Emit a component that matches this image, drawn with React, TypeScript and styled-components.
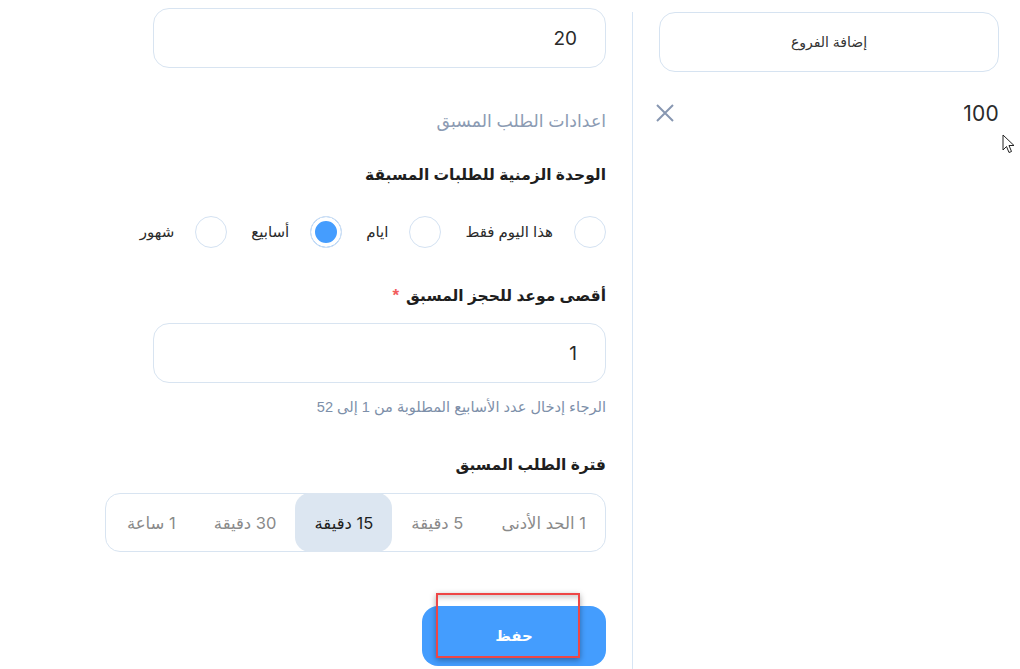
import React from "react";
import styled, { createGlobalStyle } from "styled-components";

const Global = createGlobalStyle`
  html, body { margin: 0; padding: 0; background: #ffffff; }
  body { font-family: "Liberation Sans", "DejaVu Sans", sans-serif; color: #222; }
  * { box-sizing: border-box; }
`;

const Page = styled.div`
  direction: rtl;
  display: flex;
  align-items: stretch;
  width: 1020px;
  height: 669px;
  overflow: hidden;
  padding-right: 21px;
  position: relative;
`;

const Side = styled.aside`
  width: 367px;
  flex: none;
  margin-top: 12px;
  padding-left: 26px;
  border-left: 1px solid #d7e5f4;
  display: flex;
  flex-direction: column;
`;

const BranchButton = styled.button`
  height: 60px;
  width: 100%;
  border: 1px solid #d6e3f1;
  border-radius: 16px;
  background: #fff;
  font-family: "Liberation Sans", "DejaVu Sans", sans-serif;
  font-size: 14px;
  color: #333;
  direction: rtl;
`;

const BranchRow = styled.div`
  display: flex;
  align-items: center;
  justify-content: space-between;
  margin-top: 29px;
  height: 24px;
`;

const BranchValue = styled.span`
  font-family: "Inter", "DejaVu Sans", sans-serif;
  font-size: 21px;
  color: #2a2a2a;
  letter-spacing: 0.2px;
`;

const RemoveIcon = styled.svg`
  width: 22px;
  height: 22px;
  margin-left: -5px;
`;

const Main = styled.main`
  width: 501px;
  flex: none;
  margin-right: 26px;
  display: flex;
  flex-direction: column;
  align-items: flex-start;
`;

const Field = styled.div<{ $top: number }>`
  width: 453px;
  height: 60px;
  margin-top: ${(p) => p.$top}px;
  border: 1px solid #d8e4f1;
  border-radius: 16px;
  display: flex;
  align-items: center;
  padding-right: 28px;
  font-family: "Inter", "DejaVu Sans", sans-serif;
  font-size: 19px;
  color: #2a2a2a;
`;

const SectionTitle = styled.div<{ $top: number }>`
  margin-top: ${(p) => p.$top}px;
  height: 24px;
  line-height: 24px;
  font-size: 17.3px;
  color: #8c9bb3;
`;

const Label = styled.div<{ $top: number }>`
  margin-top: ${(p) => p.$top}px;
  height: 24px;
  line-height: 24px;
  font-size: 15.5px;
  font-weight: bold;
  color: #1e1e1e;
  display: flex;
  gap: 7px;
`;

const Star = styled.span`
  color: #f25c5c;
  font-weight: bold;
  font-size: 17px;
`;

const RadioRow = styled.div`
  margin-top: 29px;
  display: flex;
  align-items: center;
  gap: 24px;
  height: 32px;
`;

const RadioItem = styled.label`
  display: flex;
  align-items: center;
  gap: 21px;
  font-size: 15px;
  color: #2a2a2a;
`;

const RadioCircle = styled.span<{ $on?: boolean }>`
  width: 32px;
  height: 32px;
  border-radius: 50%;
  border: 1px solid #d4e2f2;
  background: ${(p) => (p.$on ? "#459dfe" : "#fff")};
  box-shadow: ${(p) => (p.$on ? "inset 0 0 0 4px #fff" : "none")};
  flex: none;
`;

const Hint = styled.div`
  margin-top: 14px;
  height: 20px;
  line-height: 20px;
  font-size: 14.6px;
  color: #7d8fa9;
`;

const Segmented = styled.div`
  margin-top: 16px;
  width: 501px;
  height: 59px;
  border: 1px solid #d8e4f1;
  border-radius: 15px;
  display: flex;
  align-items: stretch;
`;

const Segment = styled.div<{ $on?: boolean }>`
  padding: 0 19px;
  display: flex;
  align-items: center;
  margin: -1px 0;
  border-radius: 15px;
  font-family: "Inter", "DejaVu Sans", sans-serif;
  font-size: 16.5px;
  color: ${(p) => (p.$on ? "#1e1e1e" : "#8a8a8a")};
  background: ${(p) => (p.$on ? "#dce6f1" : "transparent")};
  white-space: nowrap;
`;

const SaveWrap = styled.div`
  position: relative;
  margin-top: 54px;
`;

const SaveButton = styled.button`
  width: 184px;
  height: 60px;
  border: none;
  border-radius: 16px;
  background: #449dfe;
  color: #fff;
  font-family: "Liberation Sans", "DejaVu Sans", sans-serif;
  font-weight: bold;
  font-size: 15px;
`;

const Highlight = styled.div`
  position: absolute;
  right: 26px;
  top: -13px;
  width: 144px;
  height: 65px;
  border: 2px solid #ee4646;
  box-shadow: 0 2px 6px rgba(0, 0, 0, 0.35), inset 0 6px 5px -3px rgba(0, 0, 0, 0.18);
  pointer-events: none;
`;

const Cursor = styled.svg`
  position: absolute;
  left: 1002px;
  top: 134px;
  width: 14px;
  height: 20px;
`;

const units = [
  { label: "هذا اليوم فقط" },
  { label: "ايام" },
  { label: "أسابيع", on: true },
  { label: "شهور" },
];

const periods = [
  { label: "1 الحد الأدنى" },
  { label: "5 دقيقة" },
  { label: "15 دقيقة", on: true },
  { label: "30 دقيقة" },
  { label: "1 ساعة" },
];

export default function App() {
  return (
    <>
      <Global />
      <Page>
        <Side>
          <BranchButton>إضافة الفروع</BranchButton>
          <BranchRow>
            <BranchValue>100</BranchValue>
            <RemoveIcon viewBox="0 0 22 22">
              <path d="M3 3 L19 19 M19 3 L3 19" stroke="#8797b1" strokeWidth="2" fill="none" />
            </RemoveIcon>
          </BranchRow>
        </Side>
        <Main>
          <Field $top={8}>20</Field>
          <SectionTitle $top={41}>اعدادات الطلب المسبق</SectionTitle>
          <Label $top={30}>الوحدة الزمنية للطلبات المسبقة</Label>
          <RadioRow>
            {units.map((u) => (
              <RadioItem key={u.label}>
                <RadioCircle $on={u.on} />
                <span>{u.label}</span>
              </RadioItem>
            ))}
          </RadioRow>
          <Label $top={36}>
            <span>أقصى موعد للحجز المسبق</span>
            <Star>*</Star>
          </Label>
          <Field $top={15}>1</Field>
          <Hint>الرجاء إدخال عدد الأسابيع المطلوبة من 1 إلى 52</Hint>
          <Label $top={36}>فترة الطلب المسبق</Label>
          <Segmented>
            {periods.map((p) => (
              <Segment key={p.label} $on={p.on}>
                {p.label}
              </Segment>
            ))}
          </Segmented>
          <SaveWrap>
            <SaveButton>حفظ</SaveButton>
            <Highlight />
          </SaveWrap>
        </Main>
        <Cursor viewBox="0 0 14 20">
          <path d="M1 1 L1 16 L4.5 12.5 L7 18.5 L9.5 17.5 L7 11.5 L12 11.5 Z" fill="#fff" stroke="#222" strokeWidth="1" strokeLinejoin="miter" />
        </Cursor>
      </Page>
    </>
  );
}
